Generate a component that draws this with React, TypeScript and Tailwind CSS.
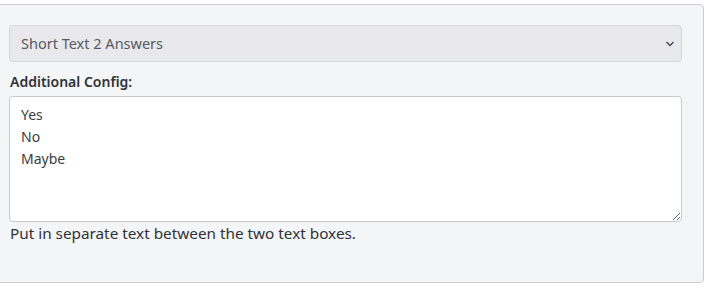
import React from "react";

export default function App() {
  return (
    <div className="w-[708px] h-[289px] bg-white overflow-hidden" style={{ fontFamily: '"Noto Sans", "Open Sans", sans-serif' }}>
      <div className="ml-[-1px] mt-[4px] w-[705px] h-[279px] border border-[#c9cdd3] rounded-r-[4px] bg-[#f4f5f7] pl-[9px] pt-[20px]">
        <div className="relative w-[673px] h-[37px] rounded-[4px] border border-[#d6d7dc] bg-[#e9e9ed] flex items-center pl-[11px] text-[14.5px] text-[#555a60]">
          <span>Short Text 2 Answers</span>
          <svg className="absolute right-[6px] top-[14px]" width="10" height="8" viewBox="0 0 10 8">
            <path d="M1.5 2 L5 5.5 L8.5 2" fill="none" stroke="#4a4d52" strokeWidth="1.5" />
          </svg>
        </div>
        <div className="mt-[10px] h-[20px] leading-[20px] text-[14px] font-semibold text-[#2f3237] pl-[1px]">Additional Config:</div>
        <textarea
          readOnly
          className="mt-[4px] block w-[673px] h-[126px] rounded-[4px] border border-[#c6cacf] bg-white pl-[11px] pt-[7px] text-[14px] leading-[22px] text-[#3a3d42] outline-none"
          defaultValue={"Yes\nNo\nMaybe"}
        />
        <div className="mt-[1px] h-[20px] leading-[20px] text-[15.3px] text-[#2f3237] pl-[1px]">Put in separate text between the two text boxes.</div>
      </div>
    </div>
  );
}
